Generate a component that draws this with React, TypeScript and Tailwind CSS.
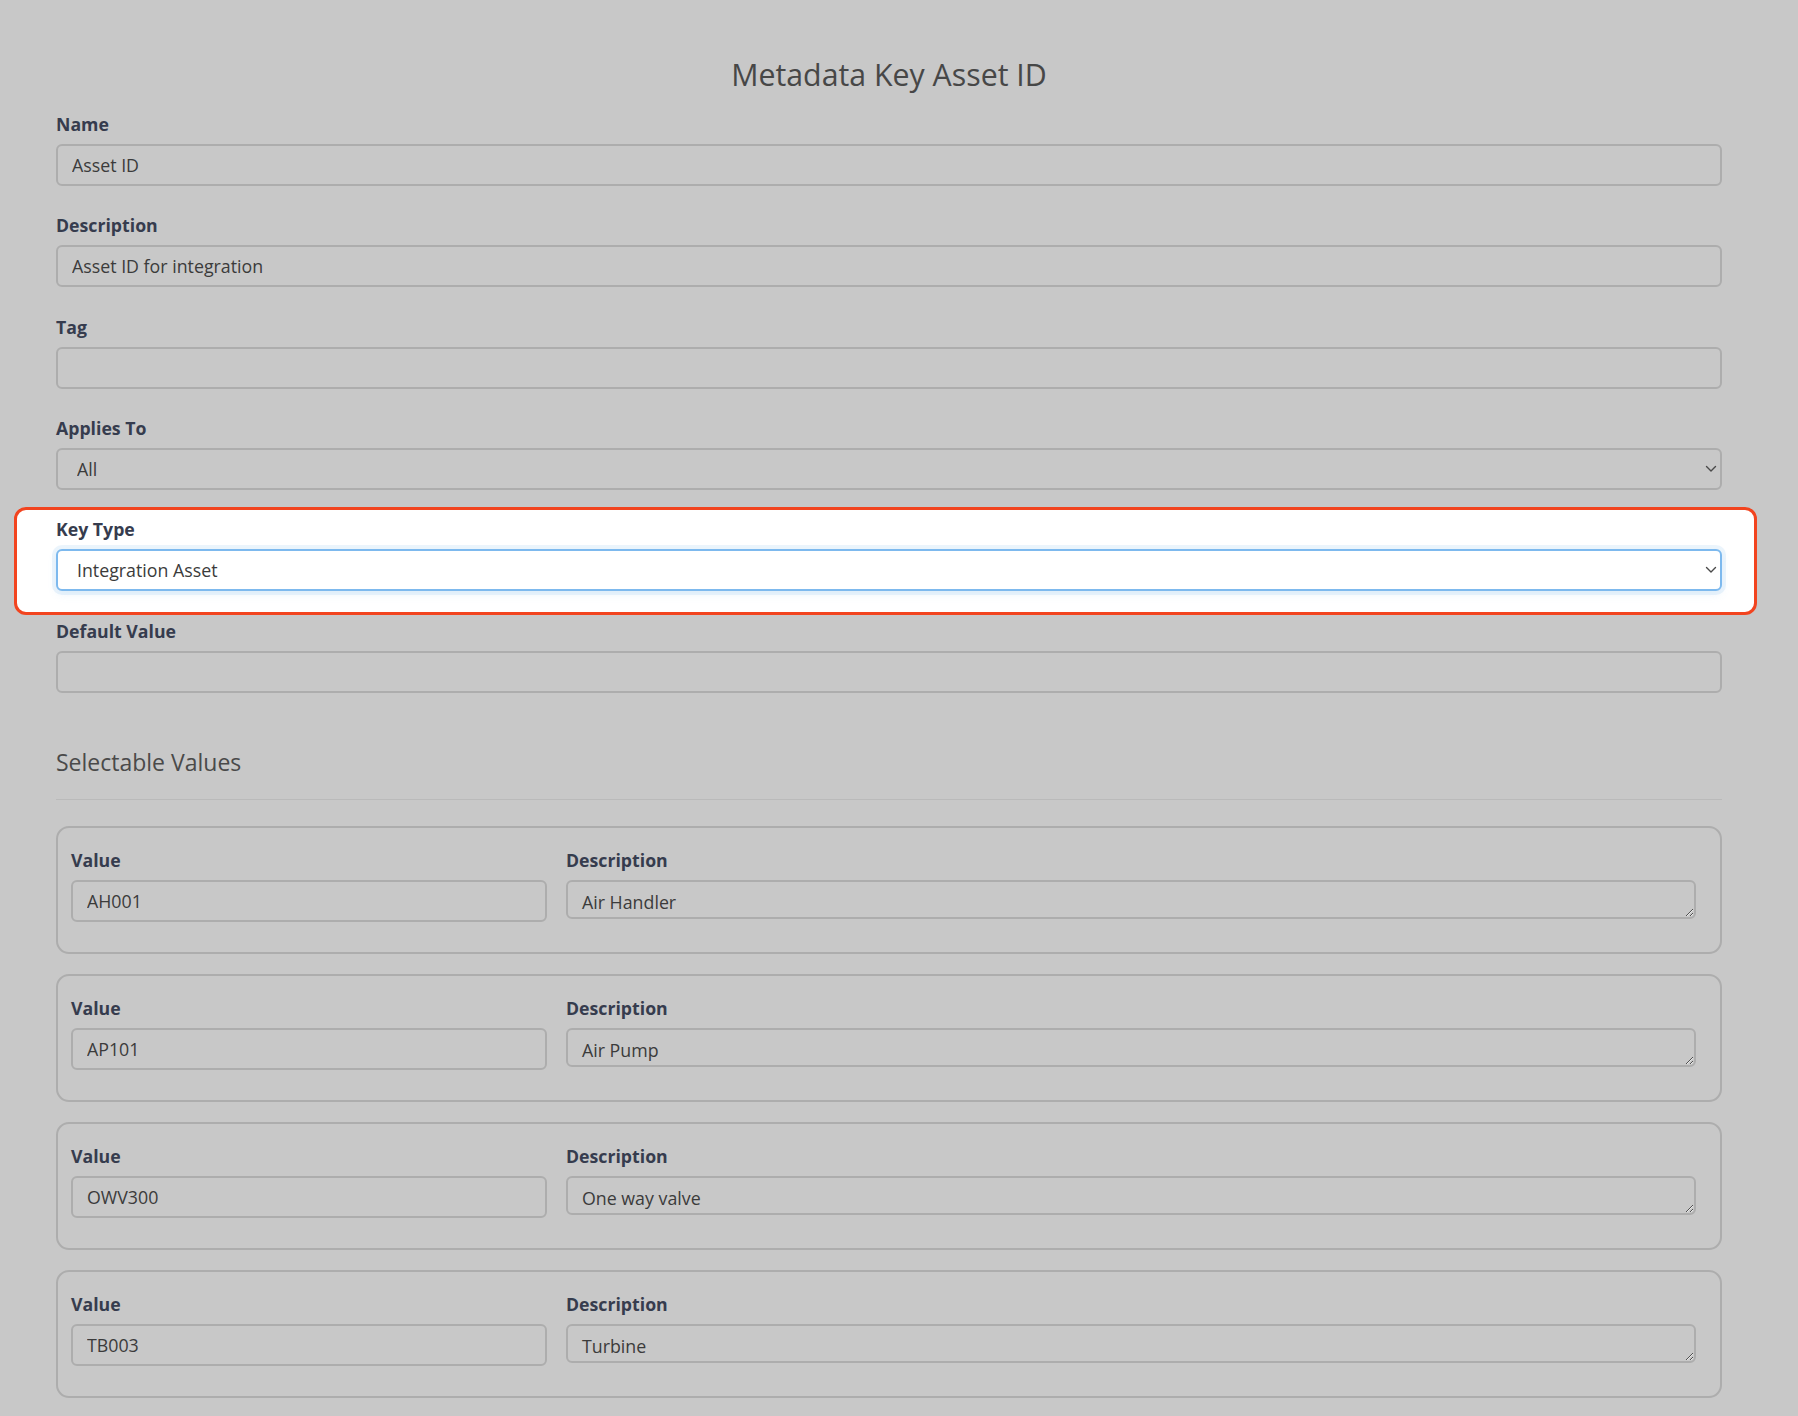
import React from "react";

const font = { fontFamily: '"Open Sans", "Noto Sans", sans-serif' };

function Chevron() {
  return (
    <svg
      className="pointer-events-none absolute right-[5px] top-1/2 -translate-y-1/2"
      width="12"
      height="8"
      viewBox="0 0 12 8"
      fill="none"
    >
      <path d="M1.5 1.5 L6 6 L10.5 1.5" stroke="#4a4a4a" strokeWidth="1.4" strokeLinecap="round" strokeLinejoin="round" />
    </svg>
  );
}

function Label({ children }: { children: React.ReactNode }) {
  return (
    <label className="block text-[17.7px] leading-[27px] font-bold text-[#363c4e] mb-[6px]">
      {children}
    </label>
  );
}

function TextInput({ value }: { value: string }) {
  return (
    <input
      readOnly
      value={value}
      className="block w-full h-[42px] rounded-[6px] border-2 border-[#adadad] bg-[#c8c8c8] pl-[14px] text-[17.8px] text-[#3b3b3b] outline-none"
      style={font}
    />
  );
}

function Field({ label, value }: { label: string; value: string }) {
  return (
    <div className="mb-[26.3px]">
      <Label>{label}</Label>
      <TextInput value={value} />
    </div>
  );
}

function Card({ value, desc }: { value: string; desc: string }) {
  return (
    <div className="mb-[20px] rounded-[13px] border-2 border-[#adadad] pl-[13px] pr-[24px] pt-[19px] pb-[30px]">
      <div className="grid grid-cols-[476px_1fr] gap-x-[19px]">
        <div>
          <Label>Value</Label>
          <TextInput value={value} />
        </div>
        <div>
          <Label>Description</Label>
          <textarea
            readOnly
            rows={1}
            value={desc}
            className="block w-full h-[39px] rounded-[6px] border-2 border-[#adadad] bg-[#c8c8c8] pl-[14px] pt-[8px] text-[17.8px] leading-[25px] text-[#3b3b3b] outline-none resize-y"
            style={font}
          />
        </div>
      </div>
    </div>
  );
}

export default function App() {
  return (
    <div className="min-h-[1416px] w-full bg-[#c8c8c8] overflow-hidden" style={font}>
      <div className="ml-[56px] w-[1666px] pt-[57px]">
        <h1 className="text-center text-[30.3px] leading-[36px] font-normal text-[#474747] mb-[18px]">
          Metadata Key Asset ID
        </h1>

        <Field label="Name" value="Asset ID" />
        <Field label="Description" value="Asset ID for integration" />
        <Field label="Tag" value="" />

        <div className="mb-[16.7px]">
          <Label>Applies To</Label>
          <div className="relative">
            <select
              className="block w-full h-[42px] appearance-none rounded-[6px] border-2 border-[#adadad] bg-[#c8c8c8] pl-[19px] text-[17.8px] text-[#3b3b3b] outline-none"
              style={font}
              defaultValue="All"
            >
              <option>All</option>
            </select>
            <Chevron />
          </div>
        </div>

        <div className="ml-[-42px] mr-[-35px] mb-[2.7px] rounded-[12px] border-[3px] border-[#f2441f] bg-white pl-[39px] pr-[32px] pt-[6.7px] pb-[20.6px]">
          <Label>Key Type</Label>
          <div className="relative">
            <select
              className="block w-full h-[42px] appearance-none rounded-[6px] border-2 border-[#7db9ee] bg-white pl-[19px] text-[17.8px] text-[#3b3b3b] outline-none shadow-[0_0_0_4px_rgba(125,185,238,0.15),0_4px_8px_rgba(125,185,238,0.12)]"
              style={font}
              defaultValue="Integration Asset"
            >
              <option>Integration Asset</option>
            </select>
            <Chevron />
          </div>
        </div>

        <div>
          <Label>Default Value</Label>
          <TextInput value="" />
        </div>

        <h2 className="mt-[56px] text-[23px] leading-[27.6px] font-normal text-[#4a4a4a]">
          Selectable Values
        </h2>
        <div className="mt-[23px] mb-[26px] h-px bg-[#bababa]" />

        <Card value="AH001" desc="Air Handler" />
        <Card value="AP101" desc="Air Pump" />
        <Card value="OWV300" desc="One way valve" />
        <Card value="TB003" desc="Turbine" />
      </div>
    </div>
  );
}
